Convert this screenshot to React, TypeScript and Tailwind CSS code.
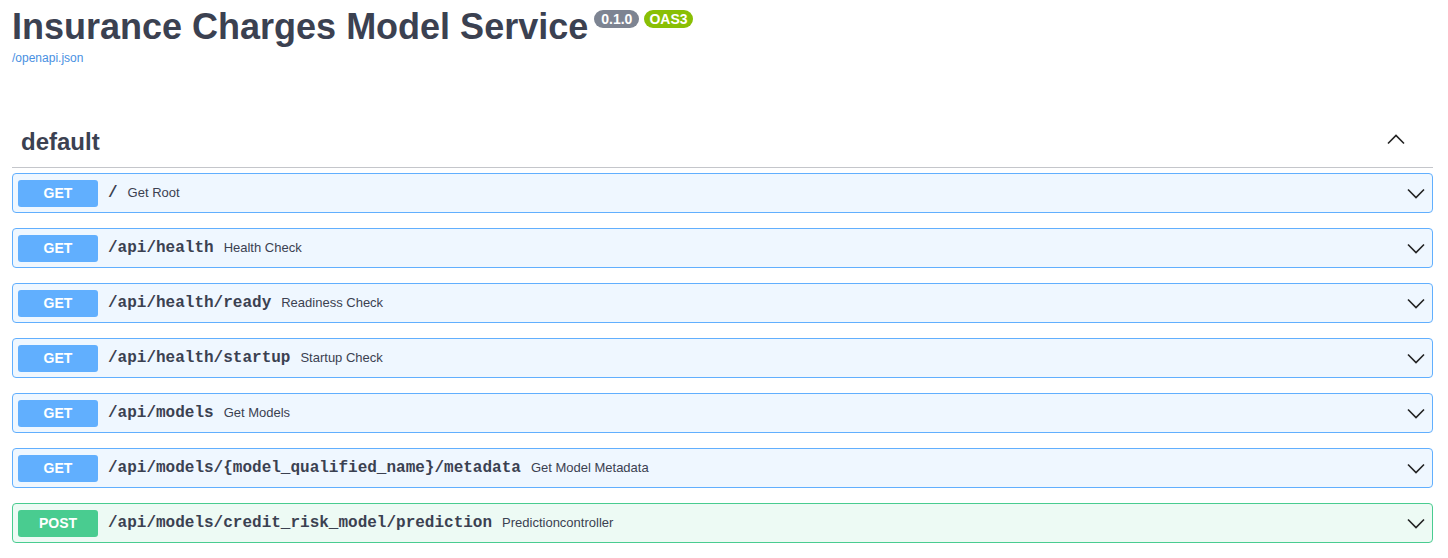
import React from "react";

type Op = {
  method: "GET" | "POST";
  path: string;
  summary: string;
};

const ops: Op[] = [
  { method: "GET", path: "/", summary: "Get Root" },
  { method: "GET", path: "/api/health", summary: "Health Check" },
  { method: "GET", path: "/api/health/ready", summary: "Readiness Check" },
  { method: "GET", path: "/api/health/startup", summary: "Startup Check" },
  { method: "GET", path: "/api/models", summary: "Get Models" },
  {
    method: "GET",
    path: "/api/models/{model_qualified_name}/metadata",
    summary: "Get Model Metadata",
  },
  {
    method: "POST",
    path: "/api/models/credit_risk_model/prediction",
    summary: "Predictioncontroller",
  },
];

const Chevron = ({ up = false }: { up?: boolean }) => (
  <svg width="20" height="20" viewBox="0 0 20 20" className="shrink-0">
    <path
      d={up ? "M2 13.5 L10 5.5 L18 13.5" : "M2 6.5 L10 14.5 L18 6.5"}
      fill="none"
      stroke="#222"
      strokeWidth="1.6"
    />
  </svg>
);

const OpRow = ({ op }: { op: Op }) => {
  const isGet = op.method === "GET";
  return (
    <div
      className={
        isGet
          ? "mb-[15px] flex h-[40px] items-center rounded border border-[#61affe] bg-[#eff7ff] px-[5px]"
          : "mb-[15px] flex h-[40px] items-center rounded border border-[#49cc90] bg-[#edfaf4] px-[5px]"
      }
    >
      <span
        className={
          isGet
            ? "flex h-[27px] w-[80px] items-center justify-center rounded-[3px] bg-[#61affe] text-[14px] font-bold text-white"
            : "flex h-[27px] w-[80px] items-center justify-center rounded-[3px] bg-[#49cc90] text-[14px] font-bold text-white"
        }
      >
        {op.method}
      </span>
      <span className="px-[10px] font-['Liberation_Mono',monospace] text-[16px] font-bold text-[#3b4151]">
        {op.path}
      </span>
      <span className="flex-1 text-[13px] text-[#3b4151]">{op.summary}</span>
      <span className="pr-[1px]">
        <Chevron />
      </span>
    </div>
  );
};

export default function App() {
  return (
    <div className="h-[558px] w-[1448px] overflow-hidden bg-white pl-3 pr-[15px] font-['Liberation_Sans',Arial,sans-serif] text-[#3b4151]">
      <div className="pt-[9px]">
        <div className="flex items-start">
          <h2 className="text-[36px] font-bold leading-[36px]">
            Insurance Charges Model Service
          </h2>
          <span className="ml-[6px] mt-[1px] flex h-[18px] items-center rounded-full bg-[#7d8492] px-[7px] text-[14px] font-bold text-white">
            0.1.0
          </span>
          <span className="ml-[5px] mt-[1px] flex h-[18px] items-center rounded-full bg-[#89bf04] px-[5px] text-[14px] font-bold text-white">
            OAS3
          </span>
        </div>
        <a className="mt-[4px] block text-[12px] text-[#4990e2]">/openapi.json</a>
      </div>

      <div className="mt-[46px]">
        <div className="mb-[5px] flex items-center border-b border-[#c4c6cb] pb-[8px] pl-[9px] pr-[27px] pt-[12px]">
          <h3 className="flex-1 text-[24px] font-bold leading-[34px]">default</h3>
          <span className="-mt-[4px]">
            <Chevron up />
          </span>
        </div>
        {ops.map((op) => (
          <OpRow key={op.path} op={op} />
        ))}
      </div>
    </div>
  );
}
